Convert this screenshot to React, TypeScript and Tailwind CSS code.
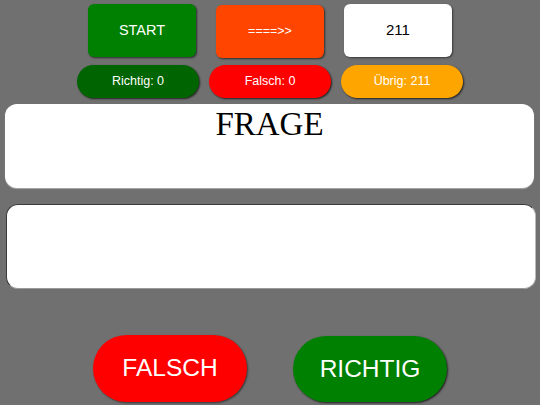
import React from "react";

const App = () => {
  return (
    <div className="w-[540px] h-[405px] bg-[#707070] overflow-hidden font-['Liberation_Sans',Arial,sans-serif] flex flex-col">
      <div className="flex justify-center gap-5 pt-1">
        <button className="w-[108px] h-[53px] rounded-md bg-[#008000] text-white text-[14.5px] shadow-[1px_1px_2px_rgba(0,0,0,0.6)]">
          START
        </button>
        <button className="w-[108px] h-[53px] mt-px rounded-md bg-[#ff4500] text-white text-[12.5px] shadow-[1px_1px_2px_rgba(0,0,0,0.6)]">
          ====&gt;&gt;
        </button>
        <div className="w-[108px] h-[53px] rounded-md bg-white text-black text-[15px] flex items-center justify-center shadow-[1px_1px_2px_rgba(0,0,0,0.5)]">
          211
        </div>
      </div>
      <div className="flex justify-center gap-[10px] mt-[7px]">
        <div className="w-[122px] h-[33px] rounded-full bg-[#006400] text-white text-[12.5px] flex items-center justify-center shadow-[1px_1px_2px_rgba(0,0,0,0.7)]">
          Richtig: 0
        </div>
        <div className="w-[122px] h-[33px] rounded-full bg-[#ff0000] text-white text-[12.5px] flex items-center justify-center shadow-[1px_1px_2px_rgba(0,0,0,0.7)]">
          Falsch: 0
        </div>
        <div className="w-[122px] h-[33px] rounded-full bg-[#ffa500] text-white text-[12.5px] flex items-center justify-center shadow-[1px_1px_2px_rgba(0,0,0,0.7)]">
          Übrig: 211
        </div>
      </div>
      <div className="mx-[5px] w-[529px] h-[84px] mt-[6px] rounded-xl bg-white shadow-[0_1px_1px_rgba(255,255,255,0.4)] text-center font-['Liberation_Serif','Times_New_Roman',serif] text-[33px] leading-[40px] text-black">
        FRAGE
      </div>
      <div className="ml-[6px] w-[530px] h-[85px] mt-[16px] rounded-xl bg-white border border-[#3a3a3a] border-r-[#bbbbbb] border-b-[#999999]" />
      <div className="flex justify-center gap-[46px] mt-[46px]">
        <button className="w-[154px] h-[67px] rounded-full bg-[#ff0000] text-white text-[24.5px] shadow-[1px_1px_2px_rgba(0,0,0,0.5)]">
          FALSCH
        </button>
        <button className="w-[154px] h-[66px] mt-px rounded-full bg-[#008000] text-white text-[24.5px] shadow-[1px_1px_2px_rgba(0,0,0,0.7)]">
          RICHTIG
        </button>
      </div>
    </div>
  );
};

export default App;
